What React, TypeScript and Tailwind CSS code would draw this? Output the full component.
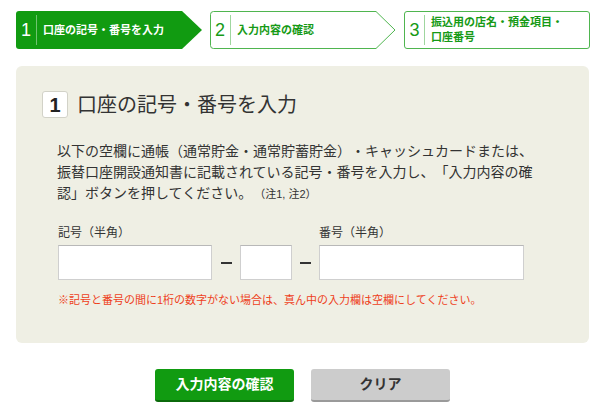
import React from "react";

const FONT = { fontFamily: '"Liberation Sans", "Noto Sans CJK JP", sans-serif' };

function StepArrow({ filled, width }: { filled: boolean; width: number }) {
  const body = width - 20;
  return (
    <svg
      className="absolute inset-0"
      width={width}
      height={38}
      viewBox={`0 0 ${width} 38`}
    >
      {filled ? (
        <path
          d={`M3 0H${body}L${width} 19L${body} 38H3Q0 38 0 35V3Q0 0 3 0Z`}
          fill="#119b11"
        />
      ) : (
        <path
          d={`M3.5 0.5H${body}L${width - 1} 19L${body} 37.5H3.5Q0.5 37.5 0.5 34.5V3.5Q0.5 0.5 3.5 0.5Z`}
          fill="#ffffff"
          stroke="#4fb54f"
        />
      )}
    </svg>
  );
}

export default function App() {
  return (
    <div className="w-[600px] h-[417px] bg-white text-[#333] [text-spacing-trim:space-all]" style={FONT}>
      {/* steps */}
      <div className="flex gap-2 pl-4 pt-[11px]">
        <div className="relative w-[186px] h-[38px]">
          <StepArrow filled width={186} />
          <div className="relative flex items-center h-full">
            <span className="w-[20px] text-center text-[18px] leading-none text-white">1</span>
            <span className="w-px h-[30px] bg-white/40" />
            <span className="ml-[6px] text-[11px] font-bold text-white">口座の記号・番号を入力</span>
          </div>
        </div>
        <div className="relative w-[186px] h-[38px]">
          <StepArrow filled={false} width={186} />
          <div className="relative flex items-center h-full">
            <span className="w-[20px] text-center text-[18px] leading-none text-[#169a16]">2</span>
            <span className="w-px h-[30px] bg-[#9fd69f]" />
            <span className="ml-[6px] text-[11px] font-bold text-[#169a16]">入力内容の確認</span>
          </div>
        </div>
        <div className="flex items-center w-[186px] h-[38px] border border-[#4fb54f] rounded-[3px] bg-white">
          <span className="w-[19px] text-center text-[18px] leading-none text-[#169a16]">3</span>
          <span className="w-px h-[30px] bg-[#9fd69f]" />
          <span className="ml-[6px] text-[11px] leading-[15px] font-bold text-[#169a16]">
            振込用の店名・預金項目・
            <br />
            口座番号
          </span>
        </div>
      </div>

      {/* panel */}
      <div className="ml-4 w-[573px] mt-[17px] rounded-md bg-[#efefe4] pl-[26px] pt-[25px] pb-[35px]">
        <div className="flex items-center">
          <span className="flex items-center justify-center w-[26px] h-[27px] rounded-[3px] border border-[#d2d2c8] bg-white text-[20px] font-bold text-[#222] leading-none">
            1
          </span>
          <h2 className="ml-[9px] text-[20px] leading-none text-[#333]">口座の記号・番号を入力</h2>
        </div>

        <p className="ml-[15px] mt-[23px] text-[14px] leading-[21px] text-[#333]">
          以下の空欄に通帳（通常貯金・通常貯蓄貯金）・キャッシュカードまたは、
          <br />
          振替口座開設通知書に記載されている記号・番号を入力し、「入力内容の確
          <br />
          認」ボタンを押してください。
          <span className="ml-[2px] text-[11px]">（注1, 注2）</span>
        </p>

        <div className="ml-[16px] mt-[19px] flex items-end">
          <div className="flex flex-col">
            <label className="text-[12px] leading-[18px] mb-[3px]">記号（半角）</label>
            <input className="w-[154px] h-[35px] bg-white border border-[#cfcfcf] border-t-[#b8b8b8] outline-none" />
          </div>
          <div className="flex items-center justify-center w-[28px] h-[35px]">
            <span className="w-[11px] h-[2px] bg-[#333]" />
          </div>
          <input className="w-[52px] h-[35px] bg-white border border-[#cfcfcf] border-t-[#b8b8b8] outline-none" />
          <div className="flex items-center justify-center w-[27px] h-[35px]">
            <span className="w-[11px] h-[2px] bg-[#333]" />
          </div>
          <div className="flex flex-col">
            <label className="text-[12px] leading-[18px] mb-[3px]">番号（半角）</label>
            <input className="w-[205px] h-[35px] bg-white border border-[#cfcfcf] border-t-[#b8b8b8] outline-none" />
          </div>
        </div>

        <p className="ml-[16px] mt-[12px] text-[11px] leading-[16px] text-[#ee3f1c]">
          ※記号と番号の間に1桁の数字がない場合は、真ん中の入力欄は空欄にしてください。
        </p>
      </div>

      {/* buttons */}
      <div className="mt-[26px] flex justify-center gap-[17px] pl-[5px]">
        <button className="w-[139px] h-[33px] rounded-[3px] bg-[#119b11] border-b-2 border-[#0b6a0b] text-[14px] font-bold text-white">
          入力内容の確認
        </button>
        <button className="w-[139px] h-[33px] rounded-[3px] bg-[#cccccc] border-b-2 border-[#9a9a9a] text-[14px] font-bold text-[#333]">
          クリア
        </button>
      </div>
    </div>
  );
}
